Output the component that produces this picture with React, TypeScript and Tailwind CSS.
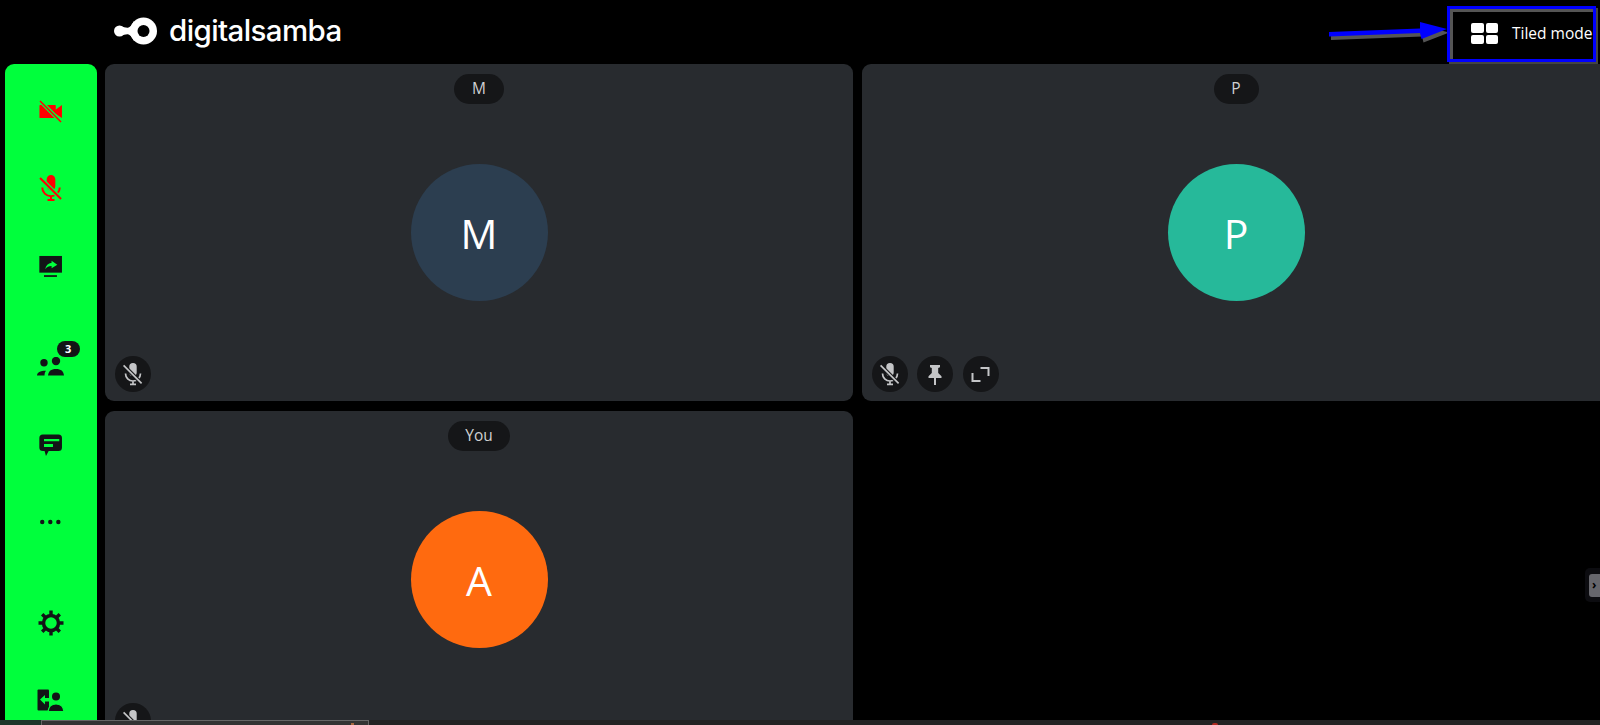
import type { ReactNode } from "react";

type IconProps = { className?: string };

const MicOff = ({ className }: IconProps) => (
  <svg viewBox="0 0 24 24" className={className} fill="none" stroke="currentColor">
    <path d="M12 .9a3.7 3.7 0 0 1 3.700 3.700v5.800a3.700 3.700 0 0 1-7.400 0V4.600A3.700 3.700 0 0 1 12 .9z" fill="currentColor" stroke="none" />
    <path d="M4.500 11.500a7.500 7.500 0 0 0 15 0M12 19v3.300M9 22.300h6" strokeWidth="1.700" />
    <path d="M2.600 3.400l18 18" strokeWidth="3.800" stroke="var(--cut)" />
    <path d="M2.600 3.400l18 18" strokeWidth="1.700" />
  </svg>
);

const Logo = () => (
  <svg viewBox="0 0 44 30" className="h-[30px] w-[44px]">
    <circle cx="29.500" cy="15" r="13.500" fill="#fff" />
    <circle cx="5.500" cy="15" r="5.500" fill="#fff" />
    <path d="M5.500 10C10 11 12 12 14 11.700 16 11.200 18 9 20 5L20 25C18 21 16 18.800 14 18.300 12 18 10 19 5.500 20z" fill="#fff" />
    <circle cx="29.500" cy="15" r="6" fill="#000" />
  </svg>
);

const SideButton = ({ children, top }: { children: ReactNode; top: string }) => (
  <div className={`flex h-[28px] w-full shrink-0 items-center justify-center ${top}`}>{children}</div>
);

const RoundButton = ({ children }: { children: ReactNode }) => (
  <div className="flex h-9 w-9 items-center justify-center rounded-full bg-[#151618] text-[#c4c5c7] [--cut:#151618]">
    {children}
  </div>
);

type TileProps = {
  label: string;
  initial: string;
  color: string;
  labelWidth: string;
  children: ReactNode;
};

const Tile = ({ label, initial, color, labelWidth, children }: TileProps) => (
  <div className="flex flex-col items-center rounded-[9px] bg-[#282b2f]">
    <div className={`mt-[9.5px] flex h-[30px] items-center justify-center rounded-full bg-[#151618] text-[15.5px] text-[#cfd0d2] ${labelWidth}`}>
      {label}
    </div>
    <div className={`mt-[60.5px] flex h-[137px] w-[137px] items-center justify-center rounded-full pt-[3px] text-[41px] text-white ${color}`}>
      {initial}
    </div>
    <div className="mt-[55px] flex w-full gap-[9.5px] pl-[9.5px]">{children}</div>
  </div>
);

export default function App() {
  return (
    <div className="flex h-[725px] w-[1600px] flex-col overflow-hidden bg-black font-['Open_Sans',sans-serif]">
      <header className="relative flex h-[64px] shrink-0 items-start">
        <div className="ml-[114px] mt-[16px] flex items-center gap-[11px]">
          <Logo />
          <span className="-mt-[1px] font-['Inter',sans-serif] text-[29.5px] font-medium leading-none tracking-[-0.6px] text-white">
            digitalsamba
          </span>
        </div>
        <svg viewBox="0 0 120 30" className="absolute left-[1328px] top-[18px] h-[30px] w-[120px]">
          <path d="M1 14L92 10.500V4L119 11L93.500 21L92 15L1 18.500z" fill="#555" transform="translate(2 3.500)" />
          <path d="M1 14L92 10.500V4L119 11L93.500 21L92 15L1 18.500z" fill="#0000ff" />
        </svg>
        <div className="relative ml-auto mr-[4px] mt-[5.5px] flex h-[56px] w-[149px] items-center border-[3px] border-[#0000ff] bg-black pl-[21px] shadow-[inset_3px_3px_0_#555,2px_2px_0_#444]">
          <div className="grid h-[21px] w-[27px] shrink-0 grid-cols-2 gap-[2px]">
            <span className="rounded-[2px] bg-white" />
            <span className="rounded-[2px] bg-white" />
            <span className="rounded-[2px] bg-white" />
            <span className="rounded-[2px] bg-white" />
          </div>
          <span className="ml-[14px] whitespace-nowrap text-[15.5px] text-white">Tiled mode</span>
        </div>
      </header>

      <main className="flex h-[656px] shrink-0 gap-[8.5px] overflow-hidden pl-[5px]">
        <nav className="flex w-[91.5px] shrink-0 flex-col rounded-t-[9px] bg-[#00ff3c] text-[#121416] [--cut:#00ff3c]">
          <SideButton top="mt-[33px]">
            <svg viewBox="0 0 24 24" className="h-7 w-7 text-[#ff0000]" fill="currentColor">
              <rect x="2.100" y="6.900" width="14" height="11.100" rx="0.500" />
              <path d="M15 11.500l6.400-4.600v11.100L15 14z" />
              <path d="M2.600 3.400l18 18" stroke="#00ff3c" strokeWidth="3.400" />
              <path d="M2.600 3.400l18 18" stroke="currentColor" strokeWidth="1.300" />
            </svg>
          </SideButton>
          <SideButton top="mt-[49px]">
            <MicOff className="h-7 w-7 text-[#ff0000]" />
          </SideButton>
          <SideButton top="mt-[50px]">
            <svg viewBox="0 0 24 24" className="h-7 w-7">
              <path d="M2 3.400h19.400v14.300H2z" fill="currentColor" />
              <path d="M6 20.600h11.100" stroke="currentColor" strokeWidth="1.500" />
              <path d="M12.500 7.400L17.400 11l-4.900 3v-2c-2.500 0-4 .8-5.500 2.800.6-3.200 2.500-5.100 5.500-5.500z" fill="#00ff3c" />
            </svg>
          </SideButton>
          <SideButton top="mt-[73px]">
            <div className="relative">
              <svg viewBox="0 0 28 20" className="h-[20px] w-[28px]" fill="currentColor">
                <circle cx="7" cy="5.700" r="3.700" />
                <circle cx="19" cy="4" r="4.200" />
                <path d="M0 18.600C0 15.500 3 13.700 9 13.700 8 14.700 7.500 16.500 7.500 18.600z" />
                <path d="M11 18.600C11.500 14 14 12 19 12 24 12 26.500 14 27 18.600z" />
              </svg>
              <span className="absolute left-[20px] -top-[16px] flex h-[16px] w-[23px] items-center justify-center rounded-full bg-[#121416] text-[11px] font-bold text-white">
                3
              </span>
            </div>
          </SideButton>
          <SideButton top="mt-[50px]">
            <svg viewBox="0 0 24 24" className="h-7 w-7">
              <path d="M5 3h13.400a3 3 0 0 1 3 3v8.200a3 3 0 0 1-3 3H10l-2.300 4.200-1.200-4.200H5a3 3 0 0 1-3-3V6a3 3 0 0 1 3-3z" fill="currentColor" />
              <path d="M6 6.900h13.100v1.900H6zM6 11.100h7.700v2.600H6z" fill="#00ff3c" />
            </svg>
          </SideButton>
          <SideButton top="mt-[49px]">
            <svg viewBox="0 0 24 24" className="h-7 w-7" fill="currentColor">
              <circle cx="4.500" cy="12" r="1.900" />
              <circle cx="11.400" cy="12" r="1.900" />
              <circle cx="18.300" cy="12" r="1.900" />
            </svg>
          </SideButton>
          <SideButton top="mt-[73px]">
            <svg viewBox="0 0 26 26" className="h-[26px] w-[26px]" fill="none" stroke="currentColor">
              <circle cx="13" cy="13" r="7.500" strokeWidth="3.500" />
              <path d="M13 .5v4M13 21.500v4M.5 13h4M21.500 13h4M4.200 4.200l2.800 2.800M19 19l2.800 2.800M4.200 21.800L7 19M19 7l2.800-2.800" strokeWidth="3.400" />
            </svg>
          </SideButton>
          <SideButton top="mt-[50px]">
            <svg viewBox="0 0 28 24" className="h-[24px] w-[28px]" fill="currentColor">
              <rect x="0.500" y="0.500" width="11.500" height="21" rx="1" />
              <path d="M3 10.500L8 6v3h5v3.500H8v3z" fill="#00ff3c" />
              <circle cx="19" cy="7.500" r="4" />
              <path d="M11 22.500C11.500 18 14 15 19 15 24 15 26.500 18 27 22.500z" stroke="#00ff3c" strokeWidth="1.200" />
            </svg>
          </SideButton>
        </nav>

        <div className="grid min-w-0 flex-1 grid-cols-[748px_748px] grid-rows-[337px_337px] gap-x-[9px] gap-y-[10px]">
          <Tile label="M" initial="M" color="bg-[#2c3e50]" labelWidth="w-[50px]">
            <RoundButton>
              <MicOff className="h-6 w-6" />
            </RoundButton>
          </Tile>
          <Tile label="P" initial="P" color="bg-[#26b99a]" labelWidth="w-[45px]">
            <RoundButton>
              <MicOff className="h-6 w-6" />
            </RoundButton>
            <RoundButton>
              <svg viewBox="0 0 24 24" className="h-6 w-6" fill="currentColor">
                <path d="M7 3h10v2.200l-1.800.8v5l3.300 3.300V16H13v7h-2v-7H5.500v-1.700L8.800 11V6L7 5.200z" />
              </svg>
            </RoundButton>
            <RoundButton>
              <svg viewBox="0 0 24 24" className="h-6 w-6" fill="none" stroke="currentColor" strokeWidth="2">
                <path d="M11.500 6h8v8M3.500 11v8h8" />
              </svg>
            </RoundButton>
          </Tile>
          <Tile label="You" initial="A" color="bg-[#ff6a0f]" labelWidth="w-[62px]">
            <RoundButton>
              <MicOff className="h-6 w-6" />
            </RoundButton>
          </Tile>
          <div className="relative">
            <div className="absolute left-[723px] top-[157px] flex h-[34px] w-[15px] items-center rounded-l-[5px] bg-[#0c0c10] pl-[4px]">
              <div className="flex h-[23px] w-[11px] items-center rounded-l-[3px] bg-[#66666c] pl-[3px] text-[12px] font-bold leading-none text-black">
                ›
              </div>
            </div>
          </div>
        </div>
      </main>

      <footer className="flex h-[5px] w-[1600px] shrink-0 bg-[#232323]">
        <div className="h-full w-[41px] bg-[#1d3529]" />
        <div className="flex h-full w-[328px] justify-end border-x border-t border-[#666] bg-[#333] pr-[14px] pt-[2px]">
          <div className="h-[2px] w-[3px] bg-[#a5683f]" />
        </div>
        <div className="ml-[843px] mt-[3px] h-[2px] w-[6px] rounded-t-full bg-[#b02a20]" />
      </footer>
    </div>
  );
}
